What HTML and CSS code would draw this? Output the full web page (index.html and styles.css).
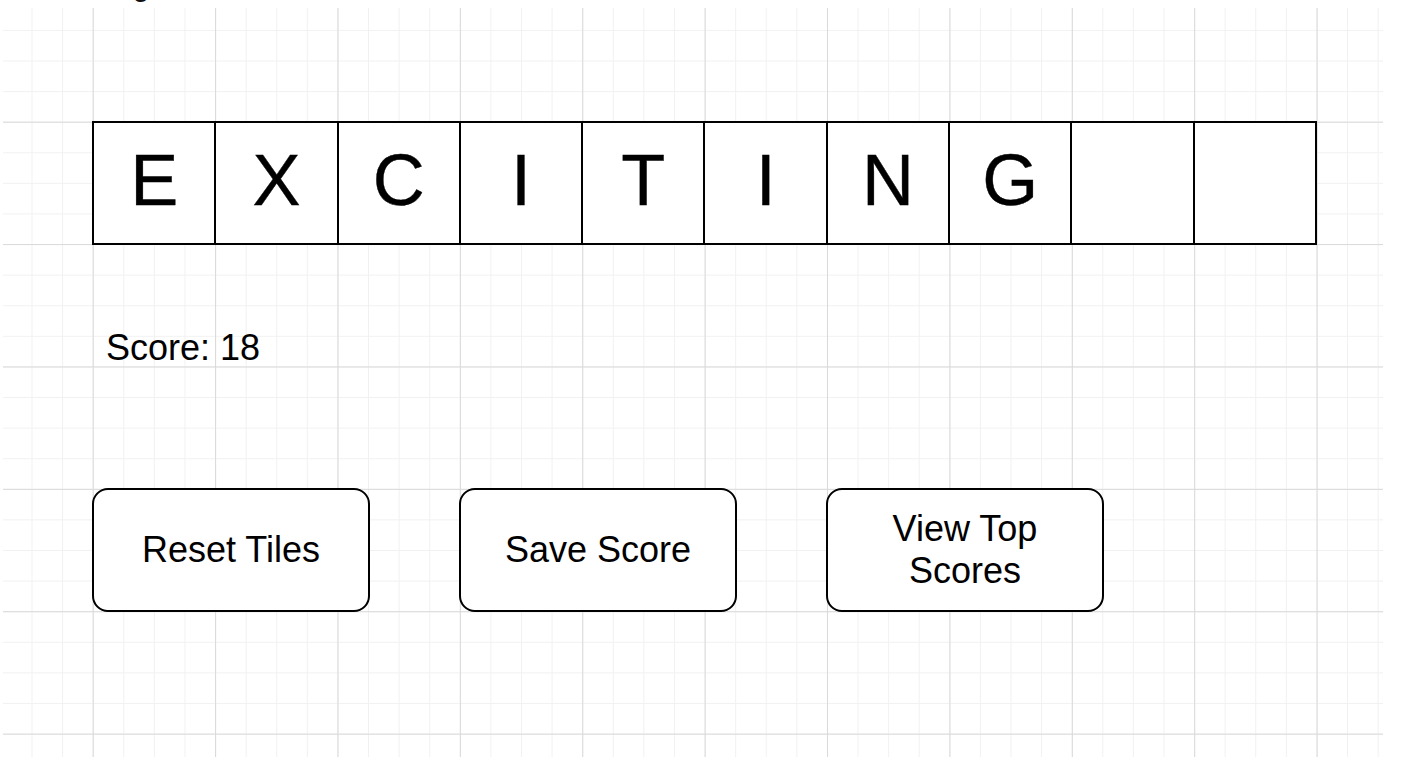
FILE: index.html
```html
<!DOCTYPE html>
<html lang="en">
<head>
<meta charset="utf-8">
<title>Word Game</title>
<link rel="stylesheet" href="styles.css">
</head>
<body>
  <div class="page-title">Page</div>
  <main class="canvas">
    <div class="tiles">
      <div class="tile">E</div>
      <div class="tile">X</div>
      <div class="tile">C</div>
      <div class="tile">I</div>
      <div class="tile">T</div>
      <div class="tile">I</div>
      <div class="tile">N</div>
      <div class="tile">G</div>
      <div class="tile"></div>
      <div class="tile"></div>
    </div>
    <div class="score">Score: 18</div>
    <div class="actions">
      <button class="action">Reset Tiles</button>
      <button class="action">Save Score</button>
      <button class="action">View Top<br>Scores</button>
    </div>
  </main>
</body>
</html>
```

FILE: styles.css
```css
html, body {
  margin: 0;
  padding: 0;
  background: #ffffff;
  overflow: hidden;
}

body {
  font-family: "Liberation Sans", Arial, Helvetica, sans-serif;
  color: #000;
}

.page-title {
  height: 30px;
  margin-top: -29px;
  padding-left: 96px;
  font-size: 30px;
  line-height: 30px;
  color: #111;
}

.canvas {
  box-sizing: border-box;
  width: 1380px;
  height: 749px;
  margin: 7px 0 0 3px;
  padding: 113px 0 0 89px;
  display: flex;
  flex-direction: column;
  background-color: #fff;
  background-image:
    linear-gradient(to right, #d9d9d9 1px, transparent 1px),
    linear-gradient(to bottom, #d9d9d9 1px, transparent 1px),
    linear-gradient(to right, #f1f1f1 1px, transparent 1px),
    linear-gradient(to bottom, #f1f1f1 1px, transparent 1px);
  background-size:
    122.4px 100%,
    100% 122.4px,
    30.6px 100%,
    100% 30.6px;
  background-position:
    89.7px 0,
    0 113.7px,
    28.5px 0,
    0 21.9px;
}

.tiles {
  box-sizing: border-box;
  display: flex;
  width: 1225px;
  height: 124px;
  border: 2px solid #000;
  background: #fff;
}

.tile {
  flex: 1 1 0;
  display: flex;
  align-items: center;
  justify-content: center;
  padding-bottom: 6px;
  border-right: 2px solid #000;
  font-size: 72px;
  line-height: 1;
  -webkit-text-stroke: 0.4px #000;
}

.tile:last-child {
  border-right: none;
}

.score {
  margin: 83px 0 0 14px;
  font-size: 36px;
  line-height: 40px;
}

.actions {
  display: flex;
  gap: 89px;
  margin-top: 120px;
}

.action {
  box-sizing: border-box;
  width: 278px;
  height: 124px;
  border: 2px solid #000;
  border-radius: 16px;
  background: #fff;
  font-family: "Liberation Sans", Arial, Helvetica, sans-serif;
  font-size: 36px;
  line-height: 42px;
  color: #000;
  padding: 0 10px;
  text-align: center;
}
```
